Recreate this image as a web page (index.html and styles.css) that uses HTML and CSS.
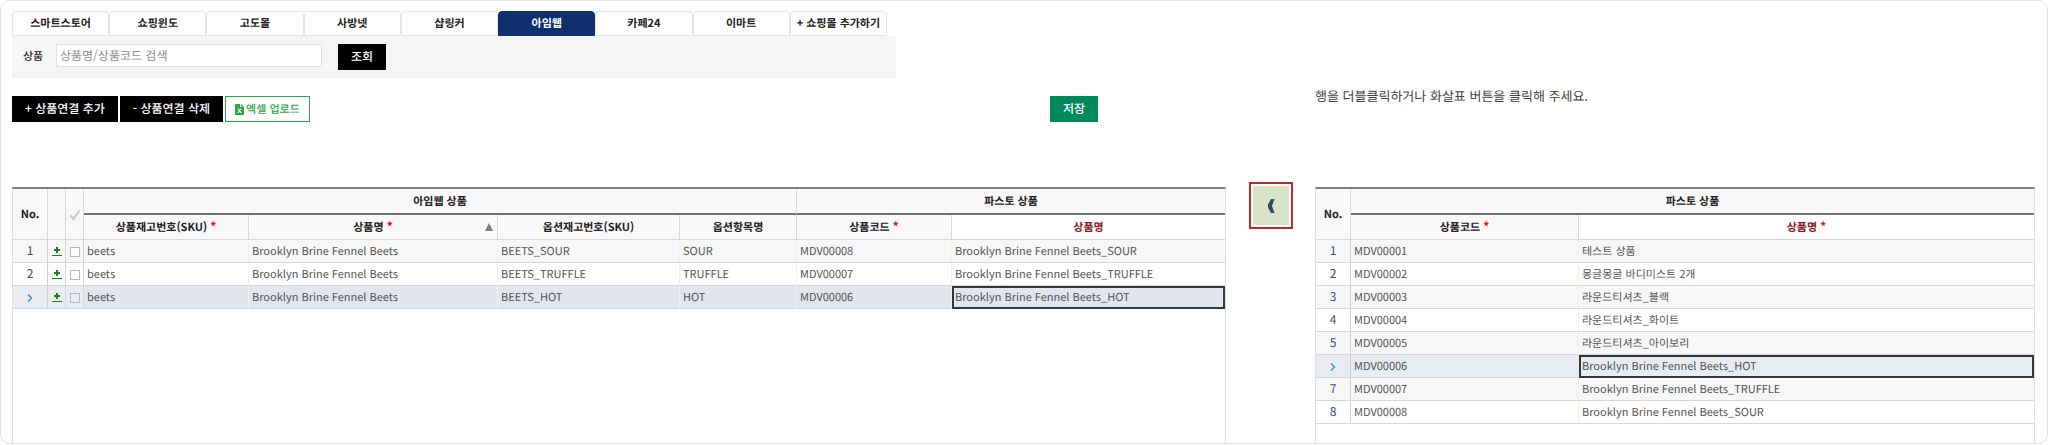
FILE: index.html
```
<!DOCTYPE html>
<html lang="ko">
<head>
    <meta charset="UTF-8">
    <meta name="viewport" content="width=device-width, initial-scale=1.0">
    <title>상품연결</title>
    <link rel="stylesheet" href="styles.css">
</head>
<body>
    <svg class="defs" width="0" height="0" aria-hidden="true">
        <symbol id="icon-add" viewBox="0 0 12 12">
            <path d="M5 1h2v2h2v2H7v2H5V5H3V3h2z" fill="#15851a"/>
            <path d="M1 9h10v1H1z" fill="#15851a"/>
        </symbol>
        <symbol id="icon-current" viewBox="0 0 8 10">
            <path d="M2 1.5 5.5 5 2 8.5" fill="none" stroke="#3b8cf0" stroke-width="1.5"/>
        </symbol>
    </svg>

    <main class="panel">
        <div class="columns top">
            <div class="tools">
                <nav class="tabs">
                    <button class="tab">스마트스토어</button>
                    <button class="tab">쇼핑윈도</button>
                    <button class="tab">고도몰</button>
                    <button class="tab">사방넷</button>
                    <button class="tab">샵링커</button>
                    <button class="tab active">아임웹</button>
                    <button class="tab">카페24</button>
                    <button class="tab">이마트</button>
                    <button class="tab">+ 쇼핑몰 추가하기</button>
                </nav>
                <form class="search">
                    <label for="keyword">상품</label>
                    <input type="text" id="keyword" placeholder="상품명/상품코드 검색">
                    <button type="button" class="btn">조회</button>
                </form>
                <div class="actions">
                    <button class="btn">+ 상품연결 추가</button>
                    <button class="btn">- 상품연결 삭제</button>
                    <button class="btn excel">
                        <svg width="9" height="11" viewBox="0 0 9 11" aria-hidden="true">
                            <path d="M1 0h4v3h4v7q0 1-1 1H1q-1 0-1-1V1q0-1 1-1z" fill="#28a745"/>
                            <path d="M6 0 9 2.5H6z" fill="#28a745"/>
                            <path d="M2.8 4.5 6.2 9M6.2 4.5 2.8 9" stroke="#fff" stroke-width="1.2"/>
                        </svg>
                        엑셀 업로드
                    </button>
                    <button class="btn save">저장</button>
                </div>
            </div>
            <p class="guide">행을 더블클릭하거나 화살표 버튼을 클릭해 주세요.</p>
        </div>

        <div class="columns grids">
            <div class="grid">
                <table>
                    <colgroup>
                        <col class="c-no"><col class="c-icon"><col class="c-check"><col class="c-sku"><col class="c-name">
                        <col class="c-optsku"><col class="c-opt"><col class="c-code"><col>
                    </colgroup>
                    <thead>
                        <tr class="group">
                            <th rowspan="2" class="fixed">No.</th>
                            <th rowspan="2" class="fixed"></th>
                            <th rowspan="2" class="fixed">
                                <svg width="12" height="12" viewBox="0 0 12 12" aria-label="전체 선택"><path d="M1.5 6.5 4.5 10 10.5 1.5" fill="none" stroke="#c9c9c9" stroke-width="2"/></svg>
                            </th>
                            <th colspan="4">아임웹 상품</th>
                            <th colspan="2">파스토 상품</th>
                        </tr>
                        <tr class="sub">
                            <th>상품재고번호(SKU) <span class="req">*</span></th>
                            <th class="sorted">상품명 <span class="req">*</span><svg class="sort" width="8" height="8" viewBox="0 0 8 8" aria-hidden="true"><path d="M4 0 8 8H0z" fill="#808080"/></svg></th>
                            <th>옵션재고번호(SKU)</th>
                            <th>옵션항목명</th>
                            <th>상품코드 <span class="req">*</span></th>
                            <th class="focus">상품명</th>
                        </tr>
                    </thead>
                    <tbody>
                        <tr>
                            <td class="no">1</td>
                            <td class="tool"><svg width="12" height="12"><use href="#icon-add"/></svg></td>
                            <td class="tool"><input type="checkbox" aria-label="1행 선택"></td>
                            <td>beets</td><td>Brooklyn Brine Fennel Beets</td><td>BEETS_SOUR</td><td>SOUR</td>
                            <td>MDV00008</td><td>Brooklyn Brine Fennel Beets_SOUR</td>
                        </tr>
                        <tr>
                            <td class="no">2</td>
                            <td class="tool"><svg width="12" height="12"><use href="#icon-add"/></svg></td>
                            <td class="tool"><input type="checkbox" aria-label="2행 선택"></td>
                            <td>beets</td><td>Brooklyn Brine Fennel Beets</td><td>BEETS_TRUFFLE</td><td>TRUFFLE</td>
                            <td>MDV00007</td><td>Brooklyn Brine Fennel Beets_TRUFFLE</td>
                        </tr>
                        <tr class="current">
                            <td class="no"><svg width="8" height="10"><use href="#icon-current"/></svg></td>
                            <td class="tool"><svg width="12" height="12"><use href="#icon-add"/></svg></td>
                            <td class="tool"><input type="checkbox" aria-label="3행 선택"></td>
                            <td>beets</td><td>Brooklyn Brine Fennel Beets</td><td>BEETS_HOT</td><td>HOT</td>
                            <td>MDV00006</td><td class="cell-focus">Brooklyn Brine Fennel Beets_HOT</td>
                        </tr>
                    </tbody>
                </table>
            </div>

            <div class="move">
                <button class="move-btn" aria-label="왼쪽으로 연결">
                    <svg width="8" height="14" viewBox="0 0 8 14" aria-hidden="true"><path d="M4 0h3.500L5 7l2.500 7H4L1 8.500v-3z" fill="#34495e"/></svg>
                </button>
            </div>

            <div class="grid">
                <table>
                    <colgroup>
                        <col class="c-no"><col class="c-pcode"><col>
                    </colgroup>
                    <thead>
                        <tr class="group">
                            <th rowspan="2" class="fixed">No.</th>
                            <th colspan="2">파스토 상품</th>
                        </tr>
                        <tr class="sub">
                            <th>상품코드 <span class="req">*</span></th>
                            <th class="focus">상품명 <span class="req">*</span></th>
                        </tr>
                    </thead>
                    <tbody>
                        <tr><td class="no">1</td><td>MDV00001</td><td>테스트 상품</td></tr>
                        <tr><td class="no">2</td><td>MDV00002</td><td>몽글몽글 바디미스트 2개</td></tr>
                        <tr><td class="no">3</td><td>MDV00003</td><td>라운드티셔츠_블랙</td></tr>
                        <tr><td class="no">4</td><td>MDV00004</td><td>라운드티셔츠_화이트</td></tr>
                        <tr><td class="no">5</td><td>MDV00005</td><td>라운드티셔츠_아이보리</td></tr>
                        <tr class="current light">
                            <td class="no"><svg width="8" height="10"><use href="#icon-current"/></svg></td>
                            <td>MDV00006</td><td class="cell-focus">Brooklyn Brine Fennel Beets_HOT</td>
                        </tr>
                        <tr><td class="no">7</td><td>MDV00007</td><td>Brooklyn Brine Fennel Beets_TRUFFLE</td></tr>
                        <tr><td class="no">8</td><td>MDV00008</td><td>Brooklyn Brine Fennel Beets_SOUR</td></tr>
                    </tbody>
                </table>
            </div>
        </div>
    </main>
</body>
</html>
```
FILE: styles.css
```
* {
    box-sizing: border-box;
}
body {
    margin: 0;
    padding-bottom: 1px;
    font-family: "Noto Sans CJK KR", "Noto Sans", sans-serif;
    font-size: 12px;
    color: #222;
    background: #fff;
    text-rendering: geometricPrecision;
}
button, input {
    font-family: inherit;
    font-size: inherit;
    text-rendering: inherit;
}
.defs {
    position: absolute;
}
.panel {
    display: flex;
    flex-direction: column;
    min-height: calc(100vh - 1px);
    padding: 10px 12px 0 11px;
    border: 1px solid #e2e2e2;
    border-radius: 10px;
}
.columns {
    display: grid;
    grid-template-columns: minmax(0, 1214fr) 89px minmax(0, 720fr);
}
.grids {
    flex: 1;
    padding-top: 65px;
}

/* tabs */
.tabs {
    display: grid;
    grid-template-columns: repeat(9, 1fr);
    max-width: 884px;
    padding-right: 9px;
}
.tab {
    height: 25px;
    padding: 0 0 2px;
    border: 1px solid #e6e6e6;
    border-radius: 4px 4px 0 0;
    background: #fff;
    color: #222;
    font-size: 11px;
    font-weight: bold;
    white-space: nowrap;
    cursor: pointer;
}
.tab.active {
    border-color: #0f2f6e;
    background: #0f2f6e;
    color: #fff;
}

/* search */
.search {
    display: flex;
    align-items: flex-start;
    max-width: 884px;
    height: 42px;
    padding: 8px 11px;
    background: #f5f5f5;
}
.search label {
    width: 33px;
    font-size: 11px;
    font-weight: 500;
    line-height: 25px;
}
.search input {
    width: 266px;
    height: 23px;
    margin-right: 16px;
    padding: 0 3px;
    border: 1px solid #e2e2e2;
    background: #fff;
}
.search input::placeholder {
    color: #8a8f94;
}
.btn {
    height: 26px;
    padding: 0 12px;
    border: 1px solid #000;
    background: #000;
    color: #fff;
    font-weight: 500;
    line-height: 20px;
    white-space: nowrap;
    cursor: pointer;
}

/* buttons above the grid */
.actions {
    display: flex;
    gap: 2px;
    max-width: 1086px;
    padding-top: 18px;
}
.btn.excel {
    display: flex;
    align-items: center;
    gap: 2px;
    padding: 0 9px;
    border-color: #28a745;
    background: #fff;
    color: #28a745;
    font-size: 11px;
}
.btn.save {
    margin-left: auto;
    border-color: #008a5c;
    background: #008a5c;
}
.guide {
    grid-column: 3;
    margin: 0;
    padding-top: 75px;
    color: #444;
    font-size: 13px;
    line-height: 20px;
}

/* grids */
.grid {
    border: 1px solid #e0e0e0;
    border-top: 2px solid #808080;
    border-bottom: 0;
}
table {
    width: 100%;
    table-layout: fixed;
    border-collapse: separate;
    border-spacing: 0;
}
.c-no { width: 35px; }
.c-icon { width: 18px; }
.c-check { width: 18px; }
.c-sku { width: 165px; }
.c-name { width: 249px; }
.c-optsku { width: 182px; }
.c-opt { width: 117px; }
.c-code { width: 155px; }
.c-pcode { width: 228px; }
th, td {
    padding: 0 3px;
    overflow: hidden;
    border-right: 1px solid #d8d8d8;
    border-bottom: 1px solid #d8d8d8;
    line-height: 18px;
    white-space: nowrap;
}
th {
    background: #f8f8f8;
    color: #222;
    font-size: 11px;
}
.group th {
    height: 26px;
    border-bottom: 2px solid #707070;
}
.group th.fixed {
    padding: 0;
    border-bottom: 1px solid #d8d8d8;
}
.sub th {
    height: 25px;
}
th.focus {
    background: #fff;
    color: #8b1a1f;
}
.req {
    color: #f00;
    font-size: 12px;
}
.sorted {
    position: relative;
}
.sort {
    position: absolute;
    right: 4px;
    top: 8px;
}
td {
    height: 23px;
    border-right-color: #f0f0f0;
    color: #555;
    font-size: 11px;
}
tr > :last-child {
    border-right: 0;
}
tbody tr:nth-child(odd) td {
    background: #f7f7f7;
}
tbody td.no {
    padding: 0;
    border-right-color: #d0d0d0;
    color: #33508f;
    font-size: 12px;
    text-align: center;
}
tbody td.tool {
    padding: 0;
    border-right-color: #d8d8d8;
    background: #fff;
    text-align: center;
}
td svg, th svg, td input {
    vertical-align: middle;
}
td input {
    appearance: none;
    width: 10px;
    height: 10px;
    margin: 0;
    border: 1px solid #b5b9be;
    background: #fff;
}
tbody tr.current td {
    background: #e1e5ed;
}
tbody tr.current td.tool, tbody tr.current td.no {
    background: #e9ecf2;
}
tbody tr.current td input {
    background: transparent;
}
tbody tr.light td, tbody tr.light td.no {
    background: #e8ecf1;
}
tbody td.cell-focus {
    outline: 2px solid #34383d;
    outline-offset: -2px;
}

/* move button */
.move {
    display: flex;
    justify-content: center;
    align-items: flex-start;
}
.move-btn {
    width: 44px;
    height: 47px;
    margin-top: -5px;
    padding: 2px;
    border: 2px solid #c9252b;
    background: #d7e2c6 content-box;
    cursor: pointer;
}
.move-btn svg {
    display: block;
    margin: auto;
}
```
